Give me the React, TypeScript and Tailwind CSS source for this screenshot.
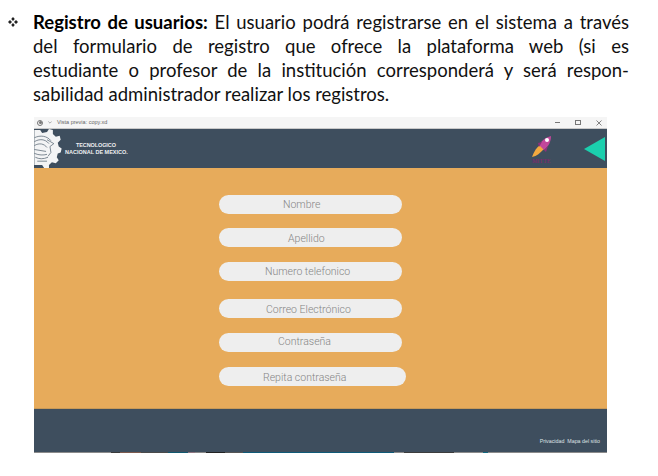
const lines = [
  "del formulario de registro que ofrece la plataforma web (si es",
  "estudiante o profesor de la institución corresponderá y será respon-",
];

const fields = [
  { label: "Nombre", box: "mt-[27px] w-[183px] pl-[64px] leading-[20px]" },
  { label: "Apellido", box: "mt-[14px] w-[183px] pl-[69px] leading-[21px]" },
  { label: "Numero telefonico", box: "mt-[15px] w-[183px] pl-[46px] leading-[20px]" },
  { label: "Correo Electrónico", box: "mt-[18px] w-[183px] pl-[47px] leading-[21px]" },
  { label: "Contraseña", box: "mt-[15px] w-[183px] pl-[59px] leading-[17px]" },
  { label: "Repita contraseña", box: "mt-[15px] w-[187px] pl-[44px] leading-[21px]" },
];

const strip = [
  "w-[77px] bg-[#8b8b8b]",
  "w-[9px] bg-[#3a3a3a]",
  "w-[21px] bg-[#7d5a4e]",
  "w-[27px] bg-[#4a4a4a]",
  "w-[20px] bg-[#11586f]",
  "w-[7px] bg-[#8d7480]",
  "w-[11px] bg-[#888888]",
  "w-[19px] bg-[#222222]",
  "w-[18px] bg-[#555555]",
  "w-[151px] bg-[#0f5a78]",
  "w-[10px] bg-[#8b8b8b]",
  "w-[50px] bg-[#3c3c3c]",
  "w-[29px] bg-[#8b8b8b]",
  "w-[5px] bg-[#11687f]",
  "w-[119px] bg-[#8b8b8b]",
];

function Bullet() {
  return (
    <svg viewBox="0 0 10 10" className="mt-[7px] h-[10px] w-[10px]">
      <path
        d="M5 0 L6.8 2 L5 4 L3.2 2 Z M5 6 L6.8 8 L5 10 L3.2 8 Z M2 3 L4 5 L2 7 L0 5 Z M8 3 L10 5 L8 7 L6 5 Z"
        fill="#222"
      />
    </svg>
  );
}

function GearLogo() {
  return (
    <svg viewBox="0 0 28 40" className="h-[39px] w-[28px] shrink-0">
      <path
        d="M0 1 L6 1 L8 4 L13 3 L15 0 L19 1 L19 5 L22 8 L26 7 L27 11 L24 14 L25 18 L28 20 L27 24 L24 25 L23 29 L25 32 L22 35 L18 34 L15 37 L15 40 L10 40 L8 37 L0 37 Z"
        fill="#f3f4f5"
      />
      <g fill="none" stroke="#5d6b78" strokeWidth="0.8">
        <path d="M0 9 C6 6 13 7 17 12" />
        <path d="M0 13 C5 10 11 10 15 15" />
        <path d="M0 17 C5 14 10 15 13 19" />
        <path d="M0 21 L12 23" />
        <path d="M0 25 C5 27 9 27 13 26" />
        <path d="M1 29 C5 31 9 31 14 29" />
        <path d="M13 11 L20 15 L16 18 L17 24 L14 28" />
        <path d="M3 33 L13 33" />
      </g>
    </svg>
  );
}

function Rocket() {
  return (
    <svg viewBox="0 0 24 30" className="h-[30px] w-[24px]">
      <path d="M1 23 C3 17 6 13 9 11 L13 15 C9 19 6 22 1 23 Z" fill="#f3a93f" />
      <path d="M8 11 C11 6 15 3 20 2 C20 7 18 12 13 16 Z" fill="#c2479b" />
      <path d="M7 9 L11 8 L8 13 Z M13 16 L17 12 L15 18 Z" fill="#8f2f7c" />
      <circle cx="16" cy="6" r="2" fill="#ffffff" />
      <text x="1" y="29" fontSize="6" fill="#8a1f72" fontFamily="Liberation Serif, serif">
        MITTE
      </text>
    </svg>
  );
}

export default function App() {
  return (
    <div className="h-[476px] w-[658px] overflow-hidden bg-white font-['Lato',sans-serif]">
      <div className="flex pt-[10px] pl-[8px] pr-[29px] text-[18.5px] leading-[24px] text-[#111]">
        <span className="w-[25px] shrink-0">
          <Bullet />
        </span>
        <div className="w-[596px]">
          <p className="text-justify [text-align-last:justify]">
            <b className="font-bold text-black">Registro de usuarios:</b> El usuario podrá registrarse en el sistema a través
          </p>
          {lines.map((line) => (
            <p key={line} className="text-justify [text-align-last:justify]">
              {line}
            </p>
          ))}
          <p>sabilidad administrador realizar los registros.</p>
        </div>
      </div>

      <div className="ml-[34px] mt-[11px] flex h-[336px] w-[573px] flex-col">
        <div className="flex h-[12px] items-center gap-[4px] border-b border-[#c9c9c9] bg-[#f5f5f5] pl-[3px] pr-[5px] text-[5.5px] text-[#666] font-['Liberation_Sans',sans-serif]">
          <span className="flex h-[6px] w-[6px] items-center justify-center rounded-full border-[0.7px] border-[#777]">
            <span className="h-[3px] w-[3px] rounded-full bg-[#777]" />
          </span>
          <svg viewBox="0 0 6 4" className="ml-[1px] h-[3px] w-[4px]">
            <path d="M0.5 0.5 L3 3 L5.5 0.5" fill="none" stroke="#777" strokeWidth="0.9" />
          </svg>
          <span className="ml-[1px]">Vista previa: copy.xd</span>
          <div className="ml-auto flex items-center gap-[15px]">
            <span className="h-px w-[5px] bg-[#777]" />
            <span className="h-[5px] w-[6px] border border-[#777]" />
            <svg viewBox="0 0 6 6" className="h-[6px] w-[6px]">
              <path d="M0.5 0.5 L5.5 5.5 M5.5 0.5 L0.5 5.5" stroke="#666" strokeWidth="0.8" />
            </svg>
          </div>
        </div>

        <div className="flex h-[39px] items-center bg-[#3e4e5e]">
          <GearLogo />
          <div className="ml-[3px] font-['Liberation_Sans',sans-serif] text-[5.5px] font-bold leading-[7px] text-[#eef0f2]">
            <div className="pl-[11px] tracking-[-0.1px]">TECNOLOGICO</div>
            <div>NACIONAL DE MEXICO.</div>
          </div>
          <div className="ml-auto flex items-center">
            <Rocket />
            <svg viewBox="0 0 21 24" className="ml-[29px] mr-[2px] h-[24px] w-[21px]">
              <path d="M0 12 L21 0 L21 24 Z" fill="#1bcfae" />
            </svg>
          </div>
        </div>

        <div className="h-[241px] border-b border-[#c99a58] bg-[#e7ab5b] pl-[185px]">
          {fields.map((f) => (
            <div
              key={f.label}
              className={`${f.box} h-[19px] rounded-full bg-[#eeeeee] font-['Roboto',sans-serif] text-[10.5px] font-light text-[#858585]`}
            >
              {f.label}
            </div>
          ))}
        </div>

        <div className="flex h-[43px] items-end justify-end bg-[#3e4e5e] pb-[8px] pr-[7px] font-['Liberation_Sans',sans-serif] text-[5.3px] leading-[6px] text-[#dfe3e6]">
          Privacidad&nbsp; Mapa del sitio
        </div>

        <div className="flex h-px">
          {strip.map((s) => (
            <span key={s} className={`${s} h-px`} />
          ))}
        </div>
      </div>
    </div>
  );
}
